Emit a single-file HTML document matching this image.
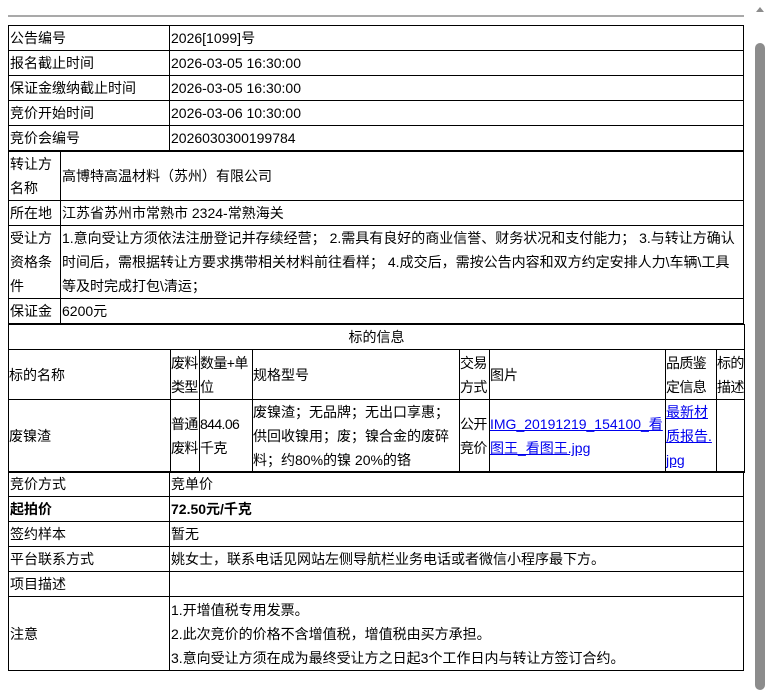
<!DOCTYPE html>
<html><head><meta charset="utf-8"><style>
html,body{margin:0;padding:0;background:#fff;width:767px;height:693px;overflow:hidden}
body{font-family:"Liberation Sans","Noto Sans CJK SC",sans-serif;font-size:14px;color:#000;position:relative}
.hr{position:absolute;left:8px;top:15px;width:736px;height:2px;background:#a9a9a9}
table{position:absolute;left:8px;width:736px;border-collapse:collapse;table-layout:fixed}
td{border:1px solid #000;padding:0 0 0 1px;vertical-align:middle;line-height:24px;overflow:hidden;white-space:normal;word-break:break-all}
.t3 td{padding:0}
.t3 .n{letter-spacing:-0.6px}
a{color:#00e;text-decoration:underline}
.sb{position:absolute;left:753px;top:0;width:14px;height:693px;background:#fff}
.th{position:absolute;left:755px;top:43px;width:10px;height:647px;background:#8c8c8c;border-radius:5px}
.up{position:absolute;left:756px;top:7px;width:0;height:0;border-left:4px solid transparent;border-right:4px solid transparent;border-bottom:5px solid #8c8c8c}
</style></head><body>
<div class="hr"></div>
<table style="top:25px">
<col style="width:161px"><col>
<tr style="height:25px"><td>公告编号</td><td>2026[1099]号</td></tr>
<tr style="height:25px"><td>报名截止时间</td><td>2026-03-05 16:30:00</td></tr>
<tr style="height:25px"><td>保证金缴纳截止时间</td><td>2026-03-05 16:30:00</td></tr>
<tr style="height:25px"><td>竞价开始时间</td><td>2026-03-06 10:30:00</td></tr>
<tr style="height:25px"><td>竞价会编号</td><td>2026030300199784</td></tr>
</table>
<table style="top:151px">
<col style="width:52px"><col>
<tr style="height:49px"><td>转让方名称</td><td>高博特高温材料（苏州）有限公司</td></tr>
<tr style="height:25px"><td>所在地</td><td>江苏省苏州市常熟市 2324-常熟海关</td></tr>
<tr style="height:73px"><td>受让方资格条件</td><td>1.意向受让方须依法注册登记并存续经营； 2.需具有良好的商业信誉、财务状况和支付能力； 3.与转让方确认时间后，需根据转让方要求携带相关材料前往看样； 4.成交后，需按公告内容和双方约定安排人力\车辆\工具<br>等及时完成打包\清运；</td></tr>
<tr style="height:25px"><td>保证金</td><td>6200元</td></tr>
</table>
<table class="t3" style="top:324px">
<col style="width:162px"><col style="width:29px"><col style="width:53px"><col style="width:207px"><col style="width:30px"><col style="width:176px"><col style="width:51px"><col style="width:28px">
<tr style="height:24px"><td colspan="8" style="text-align:center">标的信息</td></tr>
<tr style="height:50px"><td>标的名称</td><td class="n">废料类型</td><td class="n">数量+单位</td><td>规格型号</td><td class="n">交易方式</td><td>图片</td><td class="n">品质鉴定信息</td><td class="n">标的描述</td></tr>
<tr style="height:73px"><td>废镍渣</td><td class="n">普通废料</td><td class="n">844.06千克</td><td>废镍渣；无品牌；无出口享惠；<br>供回收镍用；废；镍合金的废碎<br>料；约80%的镍 20%的铬</td><td class="n">公开竞价</td><td><a>IMG_20191219_154100_看<br>图王_看图王.jpg</a></td><td><a>最新材<br>质报告.<br>jpg</a></td><td></td></tr>
</table>
<table style="top:471px">
<col style="width:161px"><col>
<tr style="height:25px"><td>竞价方式</td><td>竞单价</td></tr>
<tr style="height:25px;font-weight:bold"><td>起拍价</td><td>72.50元/千克</td></tr>
<tr style="height:25px"><td>签约样本</td><td>暂无</td></tr>
<tr style="height:25px"><td>平台联系方式</td><td>姚女士，联系电话见网站左侧导航栏业务电话或者微信小程序最下方。</td></tr>
<tr style="height:25px"><td>项目描述</td><td></td></tr>
<tr style="height:74px"><td>注意</td><td>1.开增值税专用发票。<br>2.此次竞价的价格不含增值税，增值税由买方承担。<br>3.意向受让方须在成为最终受让方之日起3个工作日内与转让方签订合约。</td></tr>
</table>
<div class="sb"></div><div class="up"></div><div class="th"></div>
</body></html>
